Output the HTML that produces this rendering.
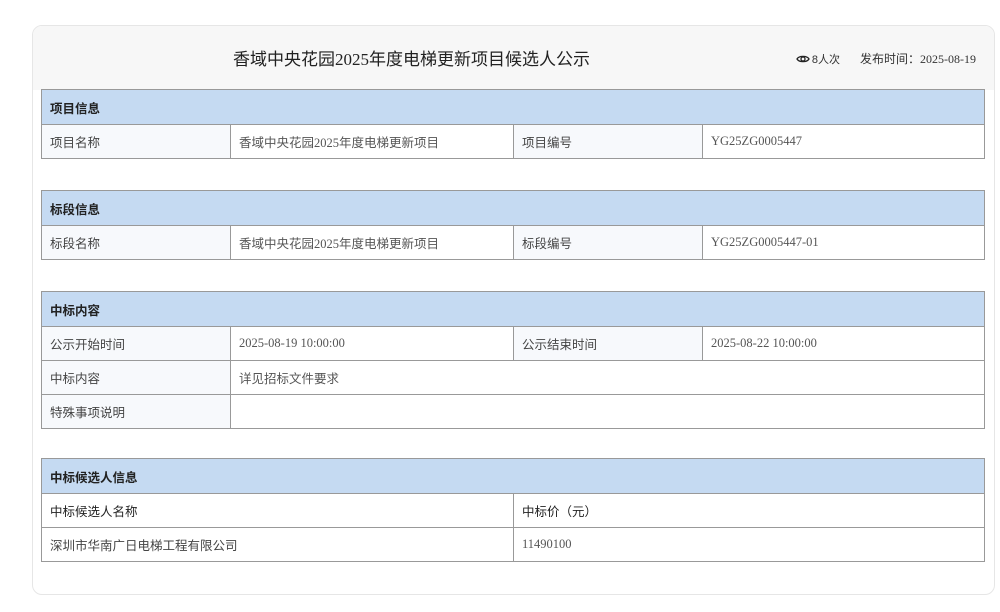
<!DOCTYPE html>
<html><head><meta charset="utf-8"><style>
body{margin:0;background:#fff;width:1000px;height:612px;position:relative;font-family:"Liberation Sans","Noto Sans CJK SC",sans-serif;color:#333}
.card{position:absolute;left:32px;top:25px;width:961px;height:568px;border:1px solid #e6e6e6;border-radius:10px;background:#fff;overflow:hidden}
.hd{position:absolute;left:0;top:0;width:100%;height:64px;background:#f7f7f7}
.title{position:absolute;left:200px;top:19px;font-size:17px;color:#222;font-family:"Liberation Serif","Noto Sans CJK SC",sans-serif}
.meta{position:absolute;right:18px;top:24px;font-size:12px;color:#333;display:flex;align-items:center}
table{position:absolute;left:41px;width:944px;border-collapse:collapse;font-size:12.5px;table-layout:fixed}
td{border:1px solid #999;padding:0 8px;height:33px;color:#444}
td.h{background:#c5daf2;font-weight:bold;color:#222;height:34px}
td.l{background:#f7f9fc}
td.v{font-family:"Liberation Serif","Noto Sans CJK SC",serif;color:#555}
</style></head><body>
<div class="card"><div class="hd"></div>
<div class="title">香域中央花园2025年度电梯更新项目候选人公示</div>
<div class="meta"><svg width="14" height="12" viewBox="0 0 14 12"><path d="M1 6C3 2.5 11 2.5 13 6C11 9.5 3 9.5 1 6Z" fill="none" stroke="#222" stroke-width="1.3"/><circle cx="7" cy="6" r="2" fill="none" stroke="#222" stroke-width="1.3"/></svg><span style="margin-left:2px;font-size:11px">8人次</span><span style="margin-left:20px">发布时间：<span style="font-family:'Liberation Serif',serif">2025-08-19</span></span></div>
</div>
<table style="top:89px"><colgroup><col style="width:189px"><col style="width:283px"><col style="width:189px"><col></colgroup>
<tr><td class="h" colspan="4">项目信息</td></tr>
<tr><td class="l">项目名称</td><td class="v">香域中央花园2025年度电梯更新项目</td><td class="l">项目编号</td><td class="v">YG25ZG0005447</td></tr></table>
<table style="top:190px"><colgroup><col style="width:189px"><col style="width:283px"><col style="width:189px"><col></colgroup>
<tr><td class="h" colspan="4">标段信息</td></tr>
<tr><td class="l">标段名称</td><td class="v">香域中央花园2025年度电梯更新项目</td><td class="l">标段编号</td><td class="v">YG25ZG0005447-01</td></tr></table>
<table style="top:291px"><colgroup><col style="width:189px"><col style="width:283px"><col style="width:189px"><col></colgroup>
<tr><td class="h" colspan="4">中标内容</td></tr>
<tr><td class="l">公示开始时间</td><td class="v">2025-08-19 10:00:00</td><td class="l">公示结束时间</td><td class="v">2025-08-22 10:00:00</td></tr>
<tr><td class="l">中标内容</td><td class="v" colspan="3">详见招标文件要求</td></tr>
<tr><td class="l">特殊事项说明</td><td colspan="3"></td></tr></table>
<table style="top:458px"><colgroup><col style="width:472px"><col></colgroup>
<tr><td class="h" colspan="2">中标候选人信息</td></tr>
<tr><td style="color:#222">中标候选人名称</td><td style="color:#222">中标价（元）</td></tr>
<tr><td>深圳市华南广日电梯工程有限公司</td><td class="v">11490100</td></tr></table>
</body></html>
